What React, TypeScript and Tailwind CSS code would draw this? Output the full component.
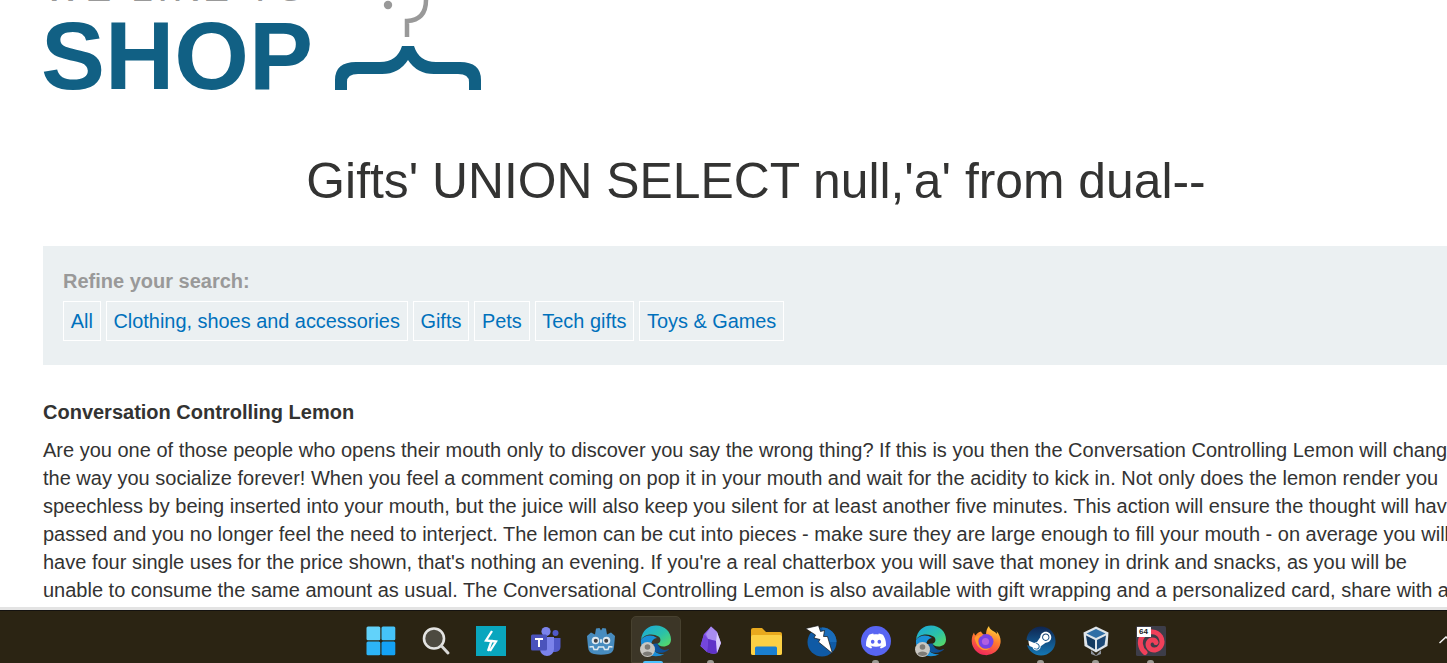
import React from "react";
import { SiDiscord } from "react-icons/si";
import { FaSteam } from "react-icons/fa";

const WinIcon = () => (
  <svg width="30" height="30" viewBox="0 0 30 30">
    <rect x="0.5" y="0.5" width="13.8" height="13.8" rx="1.5" fill="#62d2fa" />
    <rect x="15.5" y="0.5" width="13.8" height="13.8" rx="1.5" fill="#45c3f9" />
    <rect x="0.5" y="15.5" width="13.8" height="13.8" rx="1.5" fill="#2db4f7" />
    <rect x="15.5" y="15.5" width="13.8" height="13.8" rx="1.5" fill="#14a2f5" />
  </svg>
);
const SearchIcon = () => (
  <svg width="30" height="30" viewBox="0 0 30 30">
    <circle cx="13" cy="12.5" r="10" fill="#4d4a40" stroke="#e4e4e2" strokeWidth="2.6" />
    <path d="M20.5 20 L27 27" stroke="#d8d8d6" strokeWidth="3" strokeLinecap="round" />
  </svg>
);
const BoltSquare = () => (
  <svg width="30" height="30" viewBox="0 0 30 30">
    <rect width="30" height="30" fill="#09a6be" />
    <path d="M16 5 L10 14.5 L15.5 15 L12 25 M15.5 15 L20 15.5 L14 25" fill="none" stroke="#fff" strokeWidth="2.3" />
  </svg>
);
const TeamsIcon = () => (
  <svg width="32" height="32" viewBox="0 0 32 32">
    <circle cx="16" cy="6.5" r="4.6" fill="#7b83eb" />
    <circle cx="25.5" cy="8" r="3" fill="#5059c9" />
    <path d="M21 13h9.5v9a5 5 0 0 1-5 5h-1a6 6 0 0 1-3.5-1z" fill="#5059c9" />
    <path d="M10 12h14v12a7 7 0 0 1-14 0z" fill="#7b83eb" />
    <rect x="1" y="9.5" width="16" height="16" rx="1.5" fill="#4b53bc" />
    <path d="M5 13h8v2h-3v7H8v-7H5z" fill="#fff" />
  </svg>
);
const GodotIcon = () => (
  <svg width="30" height="30" viewBox="0 0 30 30">
    <path d="M1 10 L5 6.5 L9 8.5 L10 2.5 L13.5 2 L15 4.5 L16.5 2 L20 2.5 L21 8.5 L25 6.5 L29 10 L28 21 Q27.5 27 22 28 Q15 29.5 8 28 Q2.5 27 2 21 Z" fill="#478cbf" />
    <circle cx="9.5" cy="14.5" r="3.8" fill="#dfe9f0" />
    <circle cx="20.5" cy="14.5" r="3.8" fill="#dfe9f0" />
    <circle cx="9.8" cy="14.8" r="2" fill="#414042" />
    <circle cx="20.2" cy="14.8" r="2" fill="#414042" />
    <rect x="14" y="13" width="2" height="4" rx="1" fill="#dfe9f0" />
    <path d="M3.5 21 L7 20.5 L8 23.5 H11.5 L12.5 21 H17.5 L18.5 23.5 H22 L23 20.5 L26.5 21" fill="none" stroke="#dfe9f0" strokeWidth="1.5" />
  </svg>
);
const EdgeIcon = ({ id }: { id: string }) => (
  <svg width="32" height="32" viewBox="0 0 32 32">
    <defs>
      <linearGradient id={`${id}a`} x1="0" y1="0" x2="1" y2="1">
        <stop offset="0" stopColor="#1ba5e0" />
        <stop offset="0.55" stopColor="#2bc2a8" />
        <stop offset="1" stopColor="#5fdc5c" />
      </linearGradient>
      <linearGradient id={`${id}b`} x1="0" y1="0" x2="1" y2="0">
        <stop offset="0" stopColor="#0c59a4" />
        <stop offset="1" stopColor="#114a8b" />
      </linearGradient>
    </defs>
    <path d="M1 15 C2 5 9 0.5 16 0.5 C25 0.5 31 7 31 14.5 C31 19.5 27 21.5 23.5 21.5 C20 21.5 18 20 17.5 18.5 C21 18 21.5 13.5 18.5 11.5 C13 8 4 9 1 15 Z" fill={`url(#${id}a)`} />
    <path d="M1 15 C4 10 12 9 17 13 C14 13 11 16 11.5 20 C12 26 18 30 24 29 C20 32 12 32 7 29 C3 26 0.5 20 1 15 Z" fill="#1a8fd8" />
    <path d="M12 22 C13 27 20 30 27 26 C28.5 25 29.5 24 28.5 24 C24 26 20 25 17.5 18.5 C14 18 11.5 19 12 22 Z" fill={`url(#${id}b)`} />
    <circle cx="7.5" cy="24.5" r="7.5" fill="#c9c7c2" />
    <circle cx="7.5" cy="22" r="2.8" fill="#7d7b76" />
    <path d="M2.5 29 C3 25.5 12 25.5 12.5 29 C10 31.5 5 31.5 2.5 29 Z" fill="#7d7b76" />
  </svg>
);
const ObsidianIcon = () => (
  <svg width="24" height="30" viewBox="0 0 24 30">
    <path d="M12 0.5 L18 6 L22 17 L18 27 Q14 29 8 26 L1.5 20 L5 8 Z" fill="#8a5cf0" />
    <path d="M12 0.5 L18 6 L17 15 L9 13 L7 8 Z" fill="#a88cf0" />
    <path d="M9 13 L17 15 L18 27 Q14 29 8 26 Z" fill="#5f33c8" />
    <path d="M17 15 L18 6 L22 17 L18 27 Z" fill="#d8ccfa" />
    <path d="M1.5 20 L5 8 L9 13 L8 26 Z" fill="#7446dc" />
  </svg>
);
const FolderIcon = () => (
  <svg width="32" height="28" viewBox="0 0 32 28">
    <path d="M1 3 a2 2 0 0 1 2-2 h9 l4 4 h14 a2 2 0 0 1 2 2 v19 a2 2 0 0 1-2 2 H3 a2 2 0 0 1-2-2 z" fill="#e8a91e" />
    <rect x="1" y="8" width="31" height="20" rx="2" fill="#fbd045" />
    <path d="M5 28 V21 a1.5 1.5 0 0 1 1.5-1.5 H25.5 a1.5 1.5 0 0 1 1.5 1.5 V28 Z" fill="#1a7fd0" />
  </svg>
);
const ZapIcon = () => (
  <svg width="32" height="32" viewBox="0 0 32 32">
    <circle cx="17" cy="17" r="14.5" fill="#0f5aa5" />
    <path d="M17 2.5 A14.5 14.5 0 0 1 31.5 17 L20 17 Z" fill="#1a6dbb" />
    <path d="M0.5 3.5 L13.5 0.5 L15.5 6.5 L19.5 5.5 L18.5 11.5 L22.5 11.5 L27.5 28.5 L13.5 17 L15 14.5 L9 13 L10.5 10 Z" fill="#fff" stroke="#111" strokeWidth="0.7" />
  </svg>
);
const DiscordIcon = () => (
  <div className="w-[30px] h-[30px] rounded-full bg-[#5865f2] flex items-center justify-center">
    <SiDiscord className="text-white" size={20} />
  </div>
);
const FirefoxIcon = () => (
  <svg width="30" height="30" viewBox="0 0 30 30">
    <defs>
      <linearGradient id="ff" x1="0.7" y1="0" x2="0.3" y2="1">
        <stop offset="0" stopColor="#ffd43a" />
        <stop offset="0.45" stopColor="#ff7a2f" />
        <stop offset="1" stopColor="#f0245e" />
      </linearGradient>
    </defs>
    <path d="M18 0 C18 4 24 5 26 8 C26 7 26 6 25.5 5 C29 9 30 13 29.5 17 A14.5 14.5 0 0 1 0.7 15 C0.7 11 2 8 3 6.5 C3.2 8 4 9 4.5 9.5 C6 7 8 6 10 5.5 C11 8 13 9 15 9 C15 5 16 2 18 0 Z" fill="url(#ff)" />
    <circle cx="15" cy="15.5" r="7.5" fill="#7542e5" />
    <circle cx="14.5" cy="15.5" r="3.6" fill="#b15fe0" />
    <path d="M3.5 12 C6 8.5 10 8.5 12 10 C8 10 6.5 13 7.5 17 C8.5 22 14 24 19 22 C16 26 6 25 3.5 12 Z" fill="#ff9a2e" />
  </svg>
);
const SteamIcon = () => (
  <div className="relative w-[30px] h-[30px]">
    <svg width="30" height="30" viewBox="0 0 30 30" className="absolute left-0 top-0">
      <circle cx="15" cy="15" r="12.5" fill="#ffffff" />
    </svg>
    <svg width="0" height="0" className="absolute">
      <defs>
        <linearGradient id="st" x1="0.5" y1="0" x2="0.5" y2="1">
          <stop offset="0" stopColor="#0f2550" />
          <stop offset="1" stopColor="#1477b5" />
        </linearGradient>
      </defs>
    </svg>
    <FaSteam size={30} className="absolute left-0 top-0" style={{ fill: "url(#st)" }} />
  </div>
);
const VBoxIcon = () => (
  <svg width="26" height="30" viewBox="0 0 26 30">
    <path d="M8 24 L13 29.5 L18 24 L18 28 L13 30 L8 28 Z" fill="#8d929a" />
    <path d="M13 0.5 L25.5 6.5 L24.5 20 L13 26.5 L1.5 20 L0.5 6.5 Z" fill="#dfe5ea" />
    <path d="M13 3 L22.5 7.5 L13 12 L3.5 7.5 Z" fill="#2f6ea6" />
    <path d="M3 9.5 L12 14 V23.5 L4.5 19 Z" fill="#143a60" />
    <path d="M23 9.5 L14 14 V23.5 L21.5 19 Z" fill="#1d4a78" />
  </svg>
);
const SwirlIcon = () => (
  <div className="relative w-[30px] h-[30px]">
    <svg width="30" height="30" viewBox="0 0 30 30">
      <rect width="30" height="30" rx="1.5" fill="#3d3d49" />
      <path d="M9 26.5 C3.5 22 3 14 7 9.5 C12 4 21 5 24.5 10.5 C28 16.5 25 23 19 24 C14 24.5 11 20.5 12.5 16.5 C14 13 19 13 20 16.5" fill="none" stroke="#f0405a" strokeWidth="5" strokeLinecap="round" />
    </svg>
    <span className="absolute left-[1px] top-[1px] w-[14px] h-[10px] bg-white text-[#222] text-[8px] leading-[10px] font-bold text-center font-['Liberation_Sans',sans-serif]">64</span>
  </div>
);

const icons: { el: React.ReactNode; pill?: string }[] = [
  { el: <WinIcon /> },
  { el: <SearchIcon /> },
  { el: <BoltSquare /> },
  { el: <TeamsIcon /> },
  { el: <GodotIcon /> },
  { el: <EdgeIcon id="e1" />, pill: "active" },
  { el: <ObsidianIcon />, pill: "idle" },
  { el: <FolderIcon /> },
  { el: <ZapIcon /> },
  { el: <DiscordIcon />, pill: "idle" },
  { el: <EdgeIcon id="e2" /> },
  { el: <FirefoxIcon /> },
  { el: <SteamIcon />, pill: "idle" },
  { el: <VBoxIcon />, pill: "idle" },
  { el: <SwirlIcon />, pill: "idle" },
];

const filters = ["All", "Clothing, shoes and accessories", "Gifts", "Pets", "Tech gifts", "Toys & Games"];

export default function App() {
  return (
    <div className="h-[663px] w-[1447px] overflow-hidden flex flex-col bg-white font-['Liberation_Sans',Arial,sans-serif]">
      <main className="flex-1 min-h-0 overflow-hidden border-b-[3px] border-[#e3e3e3]">
        <div className="w-[1426px] ml-[43px] text-[#333332]">
          <div className="flex items-start h-[167px] -mt-[32px]">
            <div className="flex flex-col">
              <div className="text-[39px] leading-[40px] h-[40px] text-[#999] tracking-[0.115em] pl-[1px] whitespace-nowrap">WE LIKE TO</div>
              <div className="text-[96px] leading-[84px] font-bold text-[#116084] -ml-[2px] mt-[6px]">SHOP</div>
            </div>
            <svg width="150" height="125" viewBox="0 0 150 125" className="ml-[20px] -mt-[3px] shrink-0">
              <circle cx="55" cy="40" r="4.2" fill="#999" />
              <path d="M74 72 V56 Q93 55 93 35 V28" fill="none" stroke="#999" strokeWidth="4.5" />
              <path d="M2 125 V115 Q2 97 23 97 H47 Q64 97 69 81 H81 Q86 97 103 97 H127 Q148 97 148 115 V125 H136 V117 Q136 109 125 109 H101 Q84 109 75 95 Q66 109 49 109 H25 Q14 109 14 117 V125 Z" fill="#116084" />
            </svg>
          </div>
          <h1 className="text-[49.8px] leading-[60px] text-center mt-[16px] mb-[35px] whitespace-nowrap">Gifts' UNION SELECT null,'a' from dual--</h1>
          <section className="bg-[#ebf0f2] pt-[24px] pl-[20px] h-[119px]">
            <div className="text-[20px] leading-[22px] font-bold text-[#999]">Refine your search:</div>
            <div className="flex gap-[5px] mt-[9px]">
              {filters.map((f) => (
                <a key={f} className="block border border-white px-[6.8px] h-[40px] leading-[38px] text-[19.9px] text-[#0071bc] whitespace-nowrap">{f}</a>
              ))}
            </div>
          </section>
          <h3 className="text-[20px] leading-[28px] font-bold mt-[33px]">Conversation Controlling Lemon</h3>
          <p className="text-[20px] leading-[28px] mt-[10px]">
            Are you one of those people who opens their mouth only to discover you say the wrong thing? If this is you then the Conversation Controlling Lemon will change the way you socialize forever! When you feel a comment coming on pop it in your mouth and wait for the acidity to kick in. Not only does the lemon render you speechless by being inserted into your mouth, but the juice will also keep you silent for at least another five minutes. This action will ensure the thought will have passed and you no longer feel the need to interject. The lemon can be cut into pieces - make sure they are large enough to fill your mouth - on average you will have four single uses for the price shown, that's nothing an evening. If you're a real chatterbox you will save that money in drink and snacks, as you will be unable to consume the same amount as usual. The Conversational Controlling Lemon is also available with gift wrapping and a personalized card, share with all
          </p>
        </div>
      </main>
      <footer className="h-[53px] shrink-0 bg-[#2b2413] border-t border-[#141210] flex relative">
        <div className="flex ml-[353px] h-full">
          {icons.map((it, i) => (
            <div key={i} className="relative w-[55px] h-full flex items-center justify-center">
              {it.pill === "active" && (
                <div className="absolute left-[3px] right-[2px] top-[5px] bottom-0 rounded-t-[5px] bg-[#3c3627] border border-[#47412f]" />
              )}
              <div className="relative mt-[8px] flex items-center justify-center">{it.el}</div>
              {it.pill === "active" && <div className="absolute left-[15px] bottom-0 w-[20px] h-[2px] rounded-t bg-[#4cc2ff]" />}
              {it.pill === "idle" && <div className="absolute left-[24px] bottom-0 w-[7px] h-[3px] rounded-t-full bg-[#9c9a94]" />}
            </div>
          ))}
        </div>
        <svg width="8" height="8" viewBox="0 0 8 8" className="absolute right-0 top-[25px]">
          <path d="M0.5 7 L7 1 L12 6" fill="none" stroke="#f2f2f2" strokeWidth="1.5" />
        </svg>
      </footer>
    </div>
  );
}
